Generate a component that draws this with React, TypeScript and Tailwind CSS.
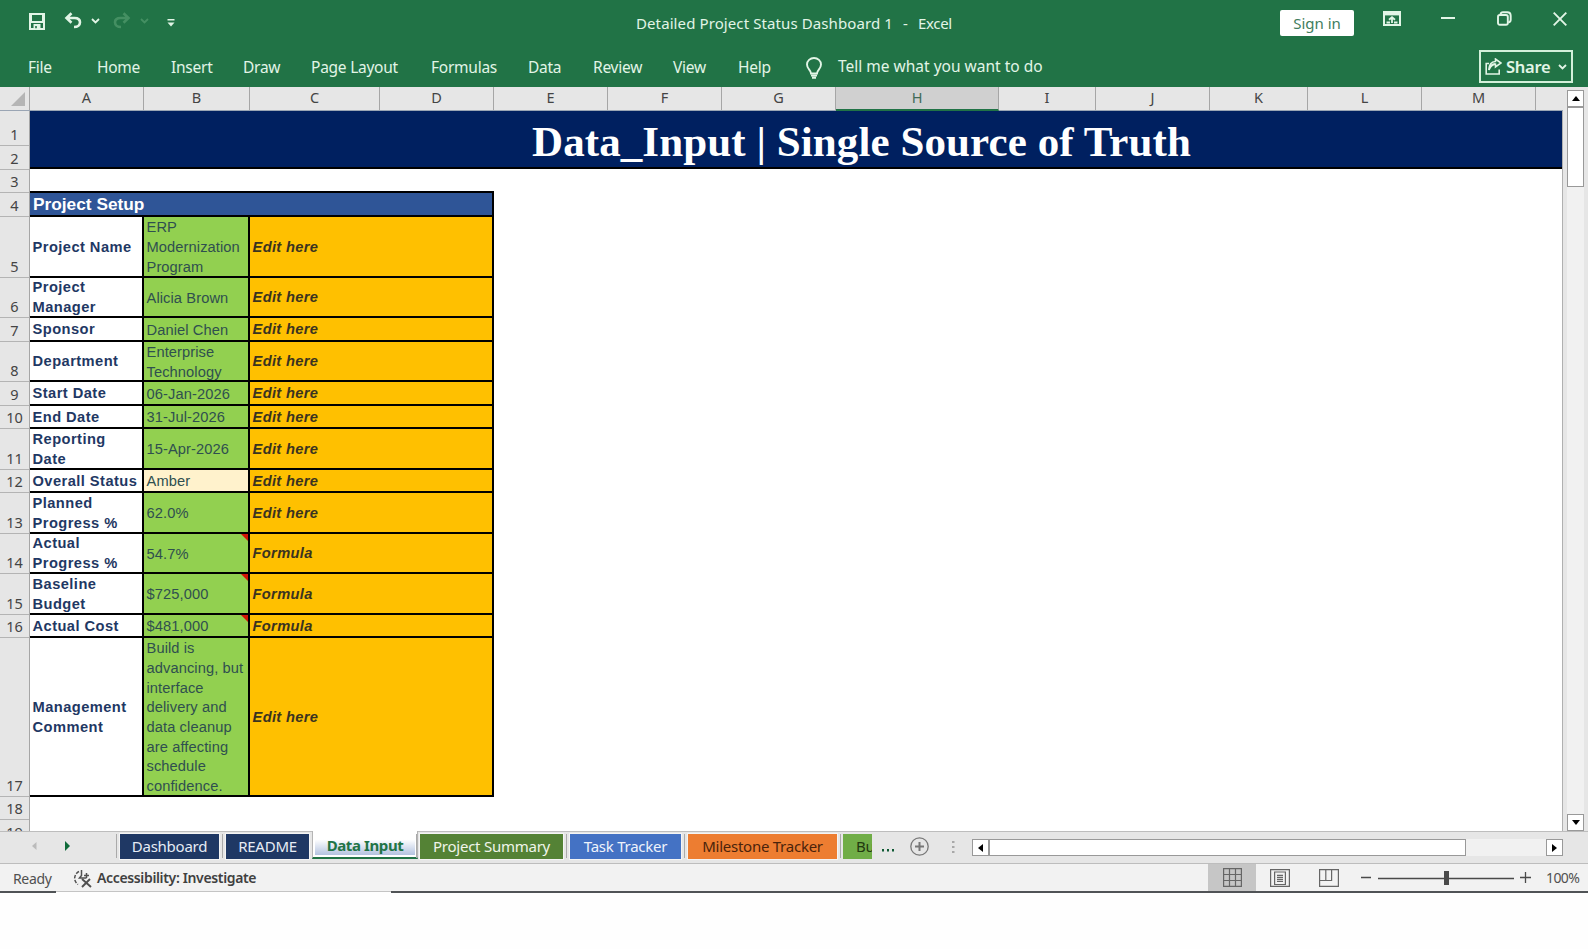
import type { ReactNode } from 'react'

type SetupRow = {
  n: number
  height: string
  label: string[]
  value: string[]
  hint: string
  amber?: boolean
  note?: boolean
}

const columns = [
  { name: 'A', width: 'w-[114px]' },
  { name: 'B', width: 'w-[106px]' },
  { name: 'C', width: 'w-[130px]' },
  { name: 'D', width: 'w-[114px]' },
  { name: 'E', width: 'w-[114px]' },
  { name: 'F', width: 'w-[114px]' },
  { name: 'G', width: 'w-[114px]' },
  { name: 'H', width: 'w-[163px]', active: true },
  { name: 'I', width: 'w-[97px]' },
  { name: 'J', width: 'w-[114px]' },
  { name: 'K', width: 'w-[98px]' },
  { name: 'L', width: 'w-[114px]' },
  { name: 'M', width: 'w-[114px]' },
]

const rows: SetupRow[] = [
  { n: 5, height: 'h-[61px]', label: ['Project Name'], value: ['ERP', 'Modernization', 'Program'], hint: 'Edit here' },
  { n: 6, height: 'h-[40px]', label: ['Project', 'Manager'], value: ['Alicia Brown'], hint: 'Edit here' },
  { n: 7, height: 'h-[24px]', label: ['Sponsor'], value: ['Daniel Chen'], hint: 'Edit here' },
  { n: 8, height: 'h-[40px]', label: ['Department'], value: ['Enterprise', 'Technology'], hint: 'Edit here' },
  { n: 9, height: 'h-[24px]', label: ['Start Date'], value: ['06-Jan-2026'], hint: 'Edit here' },
  { n: 10, height: 'h-[23px]', label: ['End Date'], value: ['31-Jul-2026'], hint: 'Edit here' },
  { n: 11, height: 'h-[41px]', label: ['Reporting', 'Date'], value: ['15-Apr-2026'], hint: 'Edit here' },
  { n: 12, height: 'h-[23px]', label: ['Overall Status'], value: ['Amber'], hint: 'Edit here', amber: true },
  { n: 13, height: 'h-[41px]', label: ['Planned', 'Progress %'], value: ['62.0%'], hint: 'Edit here' },
  { n: 14, height: 'h-[40px]', label: ['Actual', 'Progress %'], value: ['54.7%'], hint: 'Formula', note: true },
  { n: 15, height: 'h-[41px]', label: ['Baseline', 'Budget'], value: ['$725,000'], hint: 'Formula', note: true },
  { n: 16, height: 'h-[23px]', label: ['Actual Cost'], value: ['$481,000'], hint: 'Formula', note: true },
  {
    n: 17,
    height: 'h-[159px]',
    label: ['Management', 'Comment'],
    value: ['Build is', 'advancing, but', 'interface', 'delivery and', 'data cleanup', 'are affecting', 'schedule', 'confidence.'],
    hint: 'Edit here',
  },
]

const menu = [
  { name: 'File', width: 'w-[69px]' },
  { name: 'Home', width: 'w-[74px]' },
  { name: 'Insert', width: 'w-[72px]' },
  { name: 'Draw', width: 'w-[68px]' },
  { name: 'Page Layout', width: 'w-[120px]' },
  { name: 'Formulas', width: 'w-[97px]' },
  { name: 'Data', width: 'w-[65px]' },
  { name: 'Review', width: 'w-[80px]' },
  { name: 'View', width: 'w-[65px]' },
  { name: 'Help', width: 'w-[67px]' },
]

const ui = "font-['Noto_Sans',sans-serif]"

function Chevron({ className }: { className: string }) {
  return (
    <svg className={className} width="9" height="6" viewBox="0 0 9 6" fill="none" stroke="currentColor" strokeWidth="1.8">
      <path d="M1 1l3.500 3.500L8 1" />
    </svg>
  )
}

function UndoIcon({ className }: { className: string }) {
  return (
    <svg className={className} width="18" height="17" viewBox="0 0 18 17" fill="none" stroke="currentColor" strokeWidth="2.6">
      <path d="M7.500 1.200L2.500 6l5 4.800M2.800 6h7.700c3.400 0 5.500 1.700 5.500 4.200 0 2.800-2.300 4.800-6 4.800" />
    </svg>
  )
}

function TitleBar() {
  return (
    <div className="flex h-[46px] text-[#e2f5e6]">
      <div className="flex w-[636px] items-start pl-[29px] pt-[13px]">
        <svg width="16" height="17" viewBox="0 0 16 17" fill="currentColor">
          <path fillRule="evenodd" d="M0 0h16v17H0zM3 2v6h10V2zM2 10v5h2.500v-4h7v4H14v-5zM6.200 13v2.300h1.600V13z" />
        </svg>
        <UndoIcon className="-mt-px ml-[19px]" />
        <Chevron className="ml-[9px] mt-[5px]" />
        <UndoIcon className="-mt-px ml-[13px] -scale-x-100 text-[#448f62]" />
        <Chevron className="ml-[9px] mt-[5px] text-[#448f62]" />
        <svg className="ml-[18px] mt-[6px]" width="8" height="8" viewBox="0 0 8 8" fill="currentColor">
          <path d="M0.500 0h7v1.600h-7zM0.500 3.500h7L4 7.500z" />
        </svg>
      </div>
      <div className="w-[643px] whitespace-pre pt-[12px] text-[15px] leading-[22px] tracking-[0.1px]">
        Detailed Project Status Dashboard 1<span className="mx-[10px]">-</span>
        <span className="tracking-[-0.3px]">Excel</span>
      </div>
      <div className="ml-px mt-[10px] h-[26px] w-[74px] rounded-[2px] bg-white text-center text-[15px] leading-[27px] text-[#3f7d5d]">
        Sign in
      </div>
      <svg className="ml-[29px] mt-[11px]" width="18" height="15" viewBox="0 0 18 15" fill="none" stroke="currentColor">
        <path d="M1 1h16v13H1z" strokeWidth="2" />
        <path d="M1 3.200h16" strokeWidth="2.400" />
        <path d="M9 12V6.500M6 8.800l3-2.600 3 2.600M3.500 11.500h3.500M11 11.500h3.500" strokeWidth="1.8" />
      </svg>
      <svg className="ml-[40px] mt-[17px]" width="14" height="2" viewBox="0 0 14 2">
        <path d="M0 1h14" stroke="currentColor" strokeWidth="2" />
      </svg>
      <svg className="ml-[42px] mt-[11px]" width="15" height="15" viewBox="0 0 15 15" fill="none" stroke="currentColor" strokeWidth="1.900">
        <rect x="1" y="4" width="9.800" height="9.800" rx="1.800" />
        <path d="M3.500 3.500C3.700 2 4.700 1.200 6 1.200h4.200c2.200 0 3.500 1.300 3.500 3.500v4c0 1.500-.9 2.500-2.500 2.800" />
      </svg>
      <svg className="ml-[41px] mt-[12px]" width="14" height="14" viewBox="0 0 14 14" stroke="currentColor" strokeWidth="1.900">
        <path d="M.7.7l12.600 12.600M13.300.7L.7 13.300" />
      </svg>
    </div>
  )
}

function MenuBar() {
  return (
    <div className="flex h-[41px] pl-[28px] text-[15.500px] leading-[42px] tracking-[-0.25px] text-[#e2f5e6]">
      {menu.map((m) => (
        <div key={m.name} className={`${m.width} shrink-0 whitespace-nowrap`}>
          {m.name}
        </div>
      ))}
      <svg className="ml-[1px] mt-[11px]" width="16" height="22" viewBox="0 0 16 22" fill="none" stroke="currentColor" strokeWidth="1.900">
        <path d="M5 16.500c0-3.500-4-4.500-4-9a7 6.500 0 0 1 14 0c0 4.500-4 5.500-4 9z" />
        <path d="M5 18.500h6M6 20.800h4" />
      </svg>
      <div className="ml-[16px] w-[641px] leading-[40px] tracking-normal">Tell me what you want to do</div>
      <div className="mt-[4px] flex h-[33px] w-[94px] shrink-0 items-center border-2 border-[#d3f0da] pl-[4px] text-[16.500px] font-semibold">
        <svg width="17" height="17" viewBox="0 0 17 17" fill="none" stroke="currentColor" strokeWidth="1.600">
          <path d="M4 5.500H1.200V16h13v-4.500" />
          <path d="M4 12c.5-4 2.800-6.200 6.500-6.300" />
          <path d="M4 12c0-5 2.500-8.300 6.500-8.500V1L16 5l-5.500 4V6.300C7.500 6.500 5.500 8 4 12z" />
        </svg>
        <span className="ml-[4px]">Share</span>
        <Chevron className="ml-[7px]" />
      </div>
    </div>
  )
}

function ColumnHeaders() {
  return (
    <div className="flex h-[24px] border-b border-[#9aa5b4] bg-[#e6e6e6] text-[14.500px] leading-[21px] text-[#444]">
      <div className="flex w-[30px] items-end justify-end border-r border-[#a6a6a6] pb-[4px] pr-[4px]">
        <svg width="14" height="14" viewBox="0 0 14 14">
          <path d="M14 0v14H0z" fill="#b5b5b5" />
        </svg>
      </div>
      {columns.map((c) =>
        c.active ? (
          <div key={c.name} className={`${c.width} h-[24px] border-b-2 border-r border-b-[#217346] border-r-[#a6a6a6] bg-[#d0d0d0] text-center text-[#3f6b57]`}>
            {c.name}
          </div>
        ) : (
          <div key={c.name} className={`${c.width} border-r border-[#a6a6a6] text-center`}>
            {c.name}
          </div>
        ),
      )}
    </div>
  )
}

function RowNumber({ height, children }: { height: string; children: ReactNode }) {
  return (
    <div className={`${height} flex shrink-0 items-end justify-center border-b border-[#b4b4b4] pb-px text-[14.500px] leading-[19px]`}>
      {children}
    </div>
  )
}

function SetupTable() {
  return (
    <div className="w-[464px] border-r-2 border-black text-[14.670px] leading-[19.700px]">
      <div className="h-[26px] border-y-2 border-black bg-[#2f5597] pl-[3px] text-[17.300px] font-bold leading-[23px] text-white">
        Project Setup
      </div>
      {rows.map((r) => (
        <div key={r.n} className={`${r.height} flex border-b-2 border-black`}>
          <div className="flex w-[112px] flex-col justify-center whitespace-nowrap pl-[2.500px] pt-[2px] font-bold tracking-[0.45px] text-[#1f3864]">
            {r.label.map((t) => (
              <div key={t}>{t}</div>
            ))}
          </div>
          <div
            className={`relative flex w-[108px] flex-col justify-center whitespace-nowrap border-x-2 border-black pl-[2.500px] pt-[3px] tracking-[0.1px] text-[#2f4f4f] ${
              r.amber ? 'bg-[#fff2cc]' : 'bg-[#92d050]'
            }`}
          >
            {r.value.map((t) => (
              <div key={t}>{t}</div>
            ))}
            {r.note && (
              <svg className="absolute right-0 top-0" width="7" height="7" viewBox="0 0 7 7">
                <path d="M0 0h7v7z" fill="#d11507" />
              </svg>
            )}
          </div>
          <div className="flex flex-1 items-center bg-[#ffc000] pl-[2.500px] pt-[2px] font-bold italic tracking-[0.35px] text-[#3a3320]">
            {r.hint}
          </div>
        </div>
      ))}
    </div>
  )
}

function Sheet() {
  return (
    <div className="flex h-[720px] overflow-hidden">
      <div className="flex w-[30px] shrink-0 flex-col border-r border-[#a6a6a6] bg-[#e6e6e6] text-[#444]">
        <RowNumber height="h-[35px]">1</RowNumber>
        <RowNumber height="h-[24px]">2</RowNumber>
        <RowNumber height="h-[23px]">3</RowNumber>
        <RowNumber height="h-[24px]">4</RowNumber>
        {rows.map((r) => (
          <RowNumber key={r.n} height={r.height}>
            {r.n}
          </RowNumber>
        ))}
        <RowNumber height="h-[23px]">18</RowNumber>
        <RowNumber height="h-[24px]">19</RowNumber>
      </div>
      <div className="w-[1533px] border-r border-[#b0b0b0] bg-white font-['Liberation_Sans',sans-serif]">
        <div className="h-[58px] border-b-2 border-black bg-[#002060] pl-[502px] font-['Liberation_Serif',serif] text-[43px] font-bold leading-[61px] tracking-[0.09px] text-white">
          Data_Input | Single Source of Truth
        </div>
        <div className="h-[22px]" />
        <SetupTable />
      </div>
    </div>
  )
}

function VerticalScroll() {
  return (
    <div className="flex w-[25px] flex-col bg-[#e6e6e6] pl-[4px] pr-[4px] pt-[3px]">
      <div className="flex h-[17px] items-center justify-center border border-[#999] bg-white">
        <svg width="8" height="5" viewBox="0 0 8 5">
          <path d="M0 5l4-5 4 5z" />
        </svg>
      </div>
      <div className="h-[80px] border border-[#999] bg-white" />
      <div className="flex-1 bg-[#f1f1f1]" />
      <div className="flex h-[17px] items-center justify-center border border-[#999] bg-white">
        <svg width="8" height="5" viewBox="0 0 8 5">
          <path d="M0 0l4 5 4-5z" />
        </svg>
      </div>
    </div>
  )
}

function Tab({ className, children }: { className: string; children: ReactNode }) {
  return (
    <div className="mr-[2px] flex pt-[1px]">
      <div className="mr-[2px] mt-px h-[24px] w-px bg-[#aaa]" />
      <div className={`${className} h-[27px] overflow-hidden whitespace-nowrap border border-[#f4f4f4] text-center leading-[24px]`}>
        {children}
      </div>
    </div>
  )
}

function SheetTabs() {
  return (
    <div className="flex h-[33px] border-y border-[#bdbdbd] bg-[#e6e6e6] text-[15px] tracking-[-0.25px]">
      <svg className="ml-[32px] mt-[9px]" width="5" height="10" viewBox="0 0 5 10">
        <path d="M4.500 1v8L0 5z" fill="#bbb" />
      </svg>
      <svg className="ml-[28px] mt-[9px]" width="5" height="10" viewBox="0 0 5 10">
        <path d="M0 0v10l5-5z" fill="#0f6b3a" />
      </svg>
      <div className="w-[46px]" />
      <Tab className="w-[101px] bg-[#1f3864] text-[#e6ecf5]">Dashboard</Tab>
      <Tab className="w-[85px] bg-[#1f3864] text-[#e6ecf5]">README</Tab>
      <div className="-mt-px mr-[1px] h-[28px] w-[106px] border-x border-b-2 border-x-[#b5b5b5] border-b-[#217346] bg-white px-[2px] pb-[2px]">
        <div className="h-full bg-linear-to-b from-white from-35% to-[#b4c3e0] pt-[3px] text-center font-bold leading-[23px] tracking-[-0.4px] text-[#217346]">
          Data Input
        </div>
      </div>
      <div className="-ml-[3px] flex">
        <Tab className="w-[145px] bg-[#548235] text-[#f0f5ea]">Project Summary</Tab>
        <Tab className="w-[113px] bg-[#4472c4] text-[#eef2fb]">Task Tracker</Tab>
        <Tab className="w-[151px] bg-[#ed7d31] text-[#4a230b]">Milestone Tracker</Tab>
        <div className="flex pt-[2px]">
          <div className="mr-[2px] h-[24px] w-px bg-[#aaa]" />
          <div className="h-[25px] w-[29px] overflow-hidden whitespace-nowrap bg-[#70ad47] pl-[13px] leading-[24px] text-[#22380f]">Bu</div>
        </div>
      </div>
      <svg className="ml-[10px] mt-[17px]" width="13" height="3" viewBox="0 0 13 3" fill="#0f5a34">
        <path d="M0 0h2v2.500H0zM5 0h2v2.500H5zM10 0h2v2.500h-2z" />
      </svg>
      <svg className="ml-[15px] mt-[5px]" width="19" height="19" viewBox="0 0 19 19" fill="none" stroke="#777">
        <circle cx="9.500" cy="9.500" r="8.700" strokeWidth="1.300" />
        <path d="M9.500 5v9M5 9.500h9" strokeWidth="2" />
      </svg>
      <svg className="ml-[23px] mt-[9px]" width="3" height="13" viewBox="0 0 3 13" fill="#a8a8a8">
        <path d="M0 0h2.500v2H0zM0 5h2.500v2H0zM0 10h2.500v2H0z" />
      </svg>
      <div className="ml-[17px] mt-[7px] flex h-[17px] w-[591px] bg-[#f1f1f1]">
        <div className="flex w-[17px] items-center justify-center border border-[#999] bg-white">
          <svg width="5" height="8" viewBox="0 0 5 8">
            <path d="M5 0v8L0 4z" />
          </svg>
        </div>
        <div className="w-[477px] border border-[#999] bg-white" />
        <div className="flex-1" />
        <div className="flex w-[17px] items-center justify-center border border-[#999] bg-white">
          <svg width="5" height="8" viewBox="0 0 5 8">
            <path d="M0 0v8l5-4z" />
          </svg>
        </div>
      </div>
    </div>
  )
}

function StatusBar() {
  return (
    <>
      <div className="flex h-[27px] bg-[#f2f2f2] text-[14px] leading-[29px] text-[#505050]">
        <div className="w-[73px] pl-[13px] tracking-[-0.35px]">Ready</div>
        <svg className="mt-[6px]" width="19" height="18" viewBox="0 0 19 18" fill="none" stroke="currentColor" strokeWidth="1.500">
          <path d="M6 1.500A7.500 7.500 0 0 0 5 14.500" strokeDasharray="3.500 1.500" />
          <path d="M8.500 0v5.500L6.500 8h7M13.500 3v5M11 5.500h5" />
          <path d="M9 9l9 8M17 9l-8 8" strokeWidth="1.900" />
        </svg>
        <div className="ml-[5px] flex-1 font-semibold leading-[27px] tracking-[-0.35px] text-[#404040]">Accessibility: Investigate</div>
        <div className="flex w-[48px] items-center justify-center bg-[#c6c6c6]">
          <svg width="19" height="19" viewBox="0 0 19 19" fill="none" stroke="#666" strokeWidth="1.200">
            <path d="M.6.6h17.800v17.800H.6zM.6 6.500h17.800M.6 12.500h17.800M6.500.6v17.800M12.500.6v17.800" />
          </svg>
        </div>
        <div className="flex w-[48px] items-center justify-center">
          <svg width="20" height="18" viewBox="0 0 20 18" fill="none" stroke="#666" strokeWidth="1.200">
            <path d="M.6.6h18.800v16.800H.6zM4.600 3h10.800v12.500H4.600zM7 6.300h6M7 8.300h6M7 10.300h6M7 12.300h6" />
          </svg>
        </div>
        <div className="flex w-[48px] items-center justify-center pl-px">
          <svg width="20" height="18" viewBox="0 0 20 18" fill="none" stroke="#666" strokeWidth="1.200">
            <path d="M.6.6h18.800v16.800H.6zM.6 11.500h12V.6M6.800.6v10.900" />
          </svg>
        </div>
        <svg className="ml-[9px] mt-[5px]" width="170" height="18" viewBox="0 0 170 18" stroke="#4a4a4a" strokeWidth="1.300">
          <path d="M0 8.500h10M17 9.500h136M159 8.500h11M164.500 3v11" />
          <path d="M85.500 2v14" strokeWidth="5" />
        </svg>
        <div className="w-[57px] pl-[15px] leading-[27px] tracking-[-0.6px]">100%</div>
      </div>
      <div className="flex h-[2px]">
        <div className="w-[56px] bg-[#505356]" />
        <div className="w-[335px] border-t border-[#c4c4c4]" />
        <div className="flex-1 bg-[#505356]" />
      </div>
    </>
  )
}

export default function App() {
  return (
    <div className={`${ui} h-[949px] w-[1588px] overflow-hidden bg-[#fefefe]`}>
      <div className="bg-[#217346]">
        <TitleBar />
        <MenuBar />
      </div>
      <div className="flex h-[744px] bg-[#e6e6e6]">
        <div className="w-[1563px]">
          <ColumnHeaders />
          <Sheet />
        </div>
        <VerticalScroll />
      </div>
      <SheetTabs />
      <StatusBar />
    </div>
  )
}
